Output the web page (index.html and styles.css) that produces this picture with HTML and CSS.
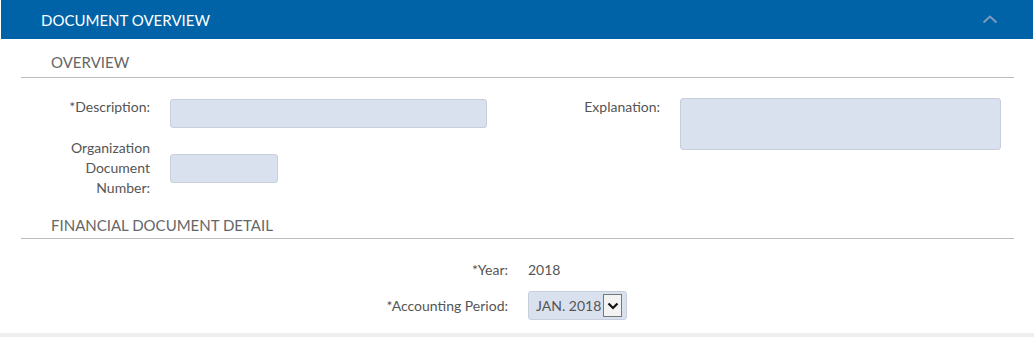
FILE: index.html
```html
<!DOCTYPE html>
<html lang="en">
<head>
    <meta charset="UTF-8">
    <title>Document Overview</title>
    <link rel="stylesheet" href="styles.css">
</head>
<body>
    <div class="panel">
        <div class="panel-header">
            <span>DOCUMENT OVERVIEW</span>
            <svg class="chevron" width="16" height="10" viewBox="0 0 16 10">
                <path d="M1.5 8.5 L8 2.5 L14.5 8.5" fill="none" stroke="#7d9bbd" stroke-width="2"/>
            </svg>
        </div>

        <div class="panel-body">
            <h3 class="section-title">OVERVIEW</h3>
            <div class="overview">
                <div class="col">
                    <div class="row top">
                        <label class="lbl lbl-left">*Description:</label>
                        <div class="input desc"></div>
                    </div>
                    <div class="row middle">
                        <label class="lbl lbl-left">Organization<br>Document<br>Number:</label>
                        <div class="input org"></div>
                    </div>
                </div>
                <div class="col">
                    <div class="row top">
                        <label class="lbl lbl-right">Explanation:</label>
                        <div class="input textarea"></div>
                    </div>
                </div>
            </div>

            <h3 class="section-title second">FINANCIAL DOCUMENT DETAIL</h3>
            <div class="detail">
                <label class="lbl">*Year:</label>
                <div class="value">2018</div>
                <label class="lbl">*Accounting Period:</label>
                <div class="select">
                    <span>JAN. 2018</span>
                    <span class="arrow">
                        <svg width="12" height="8" viewBox="0 0 12 8">
                            <path d="M1.5 1.5 L6 6 L10.5 1.5" fill="none" stroke="#111" stroke-width="2.2"/>
                        </svg>
                    </span>
                </div>
            </div>
        </div>
    </div>
</body>
</html>
```

FILE: styles.css
```css
body {
    margin: 0;
    font-family: Lato, "Open Sans", sans-serif;
    background-color: #fff;
    color: #555;
}
.panel {
    width: 1034px;
    height: 337px;
    border-bottom: 4px solid #eeeeee;
    box-sizing: border-box;
}
.panel-header {
    margin: 0 1px;
    height: 39px;
    background-color: #0063a7;
    color: #fff;
    font-size: 15px;
    display: flex;
    align-items: center;
    justify-content: space-between;
    padding: 0 35px 0 40px;
}
.chevron {
    margin-top: -2px;
}
.panel-body {
    padding: 0 20px 0 21px;
}
.section-title {
    margin: 0;
    font-size: 15px;
    font-weight: normal;
    color: #666;
    padding: 14px 0 5px 30px;
    line-height: 19px;
    border-bottom: 1px solid #bdbdbd;
}
.section-title.second {
    padding: 16px 0 3px 30px;
}
.overview {
    display: grid;
    grid-template-columns: 496px 1fr;
    padding: 19px 0 2px;
}
.col {
    display: flex;
    flex-direction: column;
    gap: 10px;
}
.row {
    display: flex;
    gap: 20px;
}
.row.top {
    align-items: flex-start;
}
.row.middle {
    align-items: center;
}
.lbl {
    font-size: 14px;
    line-height: 20px;
    text-align: right;
    color: #555;
}
.lbl-left {
    width: 129px;
}
.lbl-right {
    width: 143px;
}
.input {
    background-color: #d9e0ee;
    border: 1px solid #c8cfdc;
    border-radius: 3px;
    box-sizing: border-box;
    height: 29px;
}
.row.top .input {
    margin-top: 2px;
}
.desc {
    width: 317px;
}
.org {
    width: 108px;
}
.textarea {
    width: 321px;
    height: 52px;
}
.row.top .textarea {
    margin-top: 1px;
}
.detail {
    display: grid;
    grid-template-columns: 487px auto;
    justify-content: start;
    align-items: center;
    column-gap: 20px;
    row-gap: 11px;
    padding-top: 21px;
}
.value {
    font-size: 14px;
    line-height: 20px;
    color: #555;
}
.select {
    width: 99px;
    height: 29px;
    box-sizing: border-box;
    background-color: #d9e0ee;
    border: 1px solid #c8cfdc;
    border-radius: 3px;
    display: flex;
    align-items: center;
    justify-content: space-between;
    padding-left: 7px;
    font-size: 14px;
    color: #555;
}
.arrow {
    width: 19px;
    height: 23px;
    box-sizing: border-box;
    border: 1px solid #777;
    background-color: #f3f3f3;
    display: flex;
    align-items: center;
    justify-content: center;
    margin-right: 4px;
}
```
